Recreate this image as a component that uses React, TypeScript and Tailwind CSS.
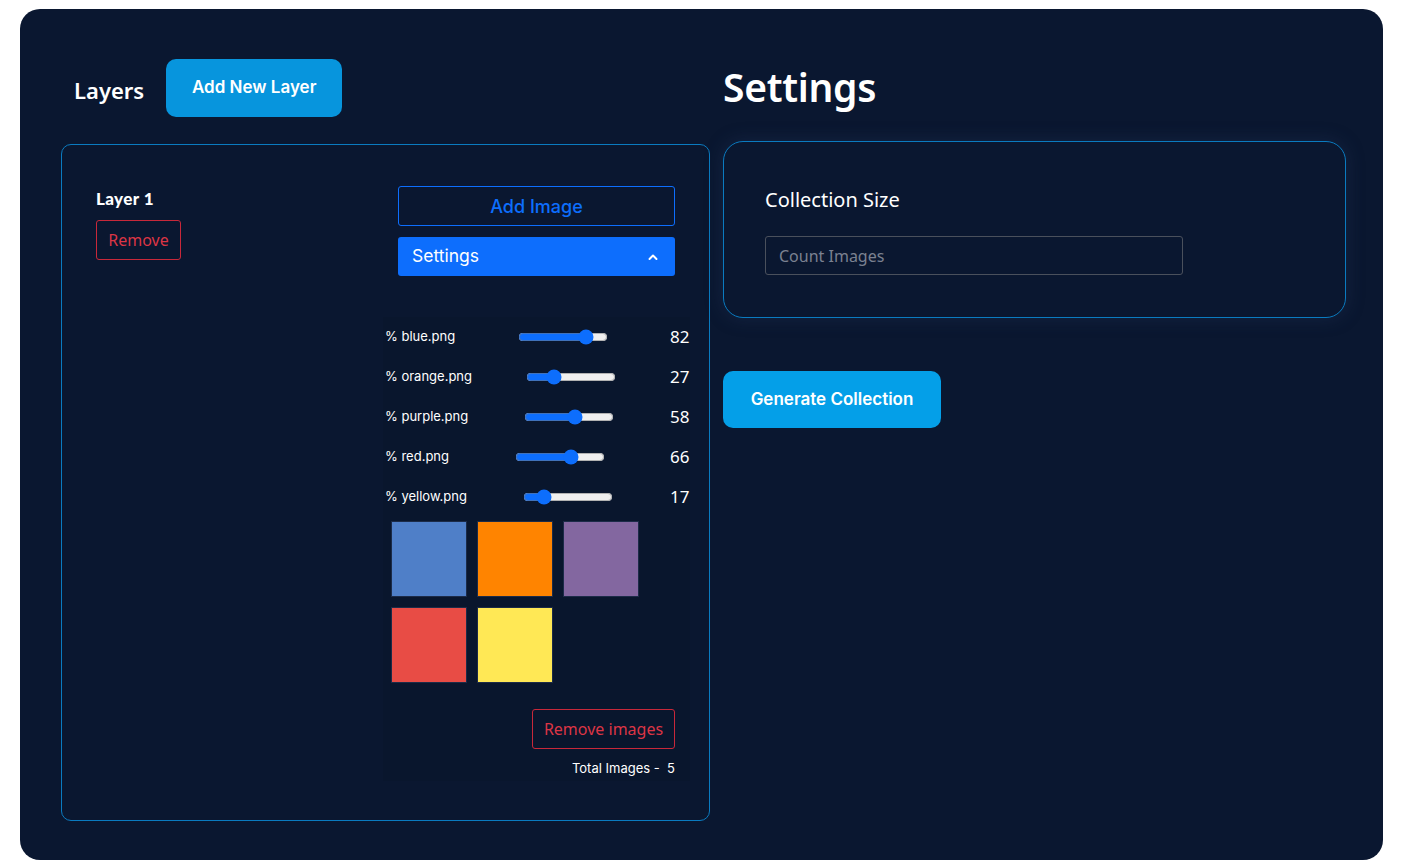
import React from "react";

// Layer images with their rarity weights
interface LayerImage {
  name: string;
  color: string;
  weight: number;
}

const images: LayerImage[] = [
  { name: "blue.png", color: "bg-[#4f7fc8]", weight: 82 },
  { name: "orange.png", color: "bg-[#ff8400]", weight: 27 },
  { name: "purple.png", color: "bg-[#8367a0]", weight: 58 },
  { name: "red.png", color: "bg-[#e84c45]", weight: 66 },
  { name: "yellow.png", color: "bg-[#ffe855]", weight: 17 },
];

const poppins = { fontFamily: "Inter, 'Noto Sans', sans-serif" };

export default function App() {
  return (
    <div className="bg-white w-full h-[863px] pt-[9px] px-5">
      <div
        className="bg-[#0a1730] rounded-[20px] h-[851px] pl-[41px] pr-[37px] pt-[50px] flex gap-[13px]"
        style={{ fontFamily: "'Noto Sans', 'Open Sans', sans-serif" }}
      >
        {/* Left side */}
        <div className="w-[649px] flex flex-col">
          <div className="flex items-center h-[58px] pl-[13px] gap-[22px]">
            <h2 className="text-white text-[22px] font-semibold mt-[4px]">Layers</h2>
            <button
              className="h-[58px] w-[176px] rounded-[10px] bg-[#0795dd] text-white text-[17px] font-semibold"
              style={poppins}
            >
              Add New Layer
            </button>
          </div>

          <div className="mt-[27px] h-[677px] border border-[#0a7bc0] rounded-[10px] pl-[34px] pr-[19px] pt-[41px] flex justify-between">
            {/* Layer name */}
            <div className="flex flex-col items-start">
              <p
                className="text-white text-[17px] font-black leading-[24px] mt-[1px] tracking-[0.4px]"
                style={{ fontFamily: "Lato, sans-serif" }}
              >
                Layer 1
              </p>
              <button className="mt-[9px] h-[40px] w-[85px] border border-[#c8283a] rounded-[3px] text-[#dc3545] text-[16px]">
                Remove
              </button>
            </div>

            {/* Images panel */}
            <div className="w-[307px] flex flex-col">
              <button
                className="mx-[15px] h-[40px] border border-[#0d6efd] rounded-[3px] text-[#0d6efd] text-[18px] font-medium"
                style={poppins}
              >
                Add Image
              </button>
              <button
                className="mx-[15px] mt-[11px] h-[39px] bg-[#0d6efd] rounded-[3px] text-white text-[17.5px] flex items-center justify-between pl-[14px] pr-[16px]"
                style={poppins}
              >
                <span>Settings</span>
                <svg width="12" height="12" viewBox="0 0 12 12" fill="none">
                  <polyline points="2.5,8 6,4.5 9.5,8" stroke="white" strokeWidth="2" strokeLinecap="round" strokeLinejoin="round" />
                </svg>
              </button>

              <div className="mt-[41px] bg-[#09162d] flex flex-col">
                {images.map((img) => (
                  <div key={img.name} className="h-[40px] pl-[2px] pr-[2px] flex items-center justify-between">
                    <span className="text-white text-[13px]" style={poppins}>
                      % {img.name}
                    </span>
                    <input
                      type="range"
                      min={0}
                      max={100}
                      defaultValue={img.weight}
                      className="w-[90px] accent-[#0d6efd]"
                    />
                    <span className="text-white text-[17px] w-[18px] text-right">{img.weight}</span>
                  </div>
                ))}

                <div className="mt-[4px] pl-[8px] grid grid-cols-[76px_76px_76px] gap-x-[10px] gap-y-[10px]">
                  {images.map((img) => (
                    <div key={img.name} className={`h-[76px] ${img.color} border border-[#1c2b48]`} />
                  ))}
                </div>

                <div className="flex flex-col items-end pr-[15px]">
                  <button className="mt-[26px] h-[40px] w-[143px] border border-[#c8283a] rounded-[3px] text-[#dc3545] text-[16px]">
                    Remove images
                  </button>
                  <p className="mt-[10px] text-white text-[13px] pb-[2px]" style={poppins}>
                    Total Images - &nbsp;5
                  </p>
                </div>
              </div>
            </div>
          </div>
        </div>

        {/* Right side */}
        <div className="w-[623px] flex flex-col">
          <h1 className="text-white text-[39px] font-semibold leading-[48px] mt-[4px] tracking-[-0.3px]">Settings</h1>
          <div className="mt-[30px] h-[177px] border border-[#0a7bc0] rounded-[20px] pl-[41px] pt-[44px] shadow-[0_0_18px_rgba(40,60,100,0.35)]">
            <p className="text-white text-[20px] leading-[28px]">Collection Size</p>
            <input
              placeholder="Count Images"
              className="mt-[22px] w-[418px] h-[39px] border border-[#4a505c] rounded-[3px] bg-transparent px-[13px] text-[16px] text-white placeholder:text-[#7b8190] outline-none"
            />
          </div>
          <button
            className="mt-[53px] h-[57px] w-[218px] rounded-[10px] bg-[#049fe8] text-white text-[17px] font-semibold"
            style={poppins}
          >
            Generate Collection
          </button>
        </div>
      </div>
    </div>
  );
}
